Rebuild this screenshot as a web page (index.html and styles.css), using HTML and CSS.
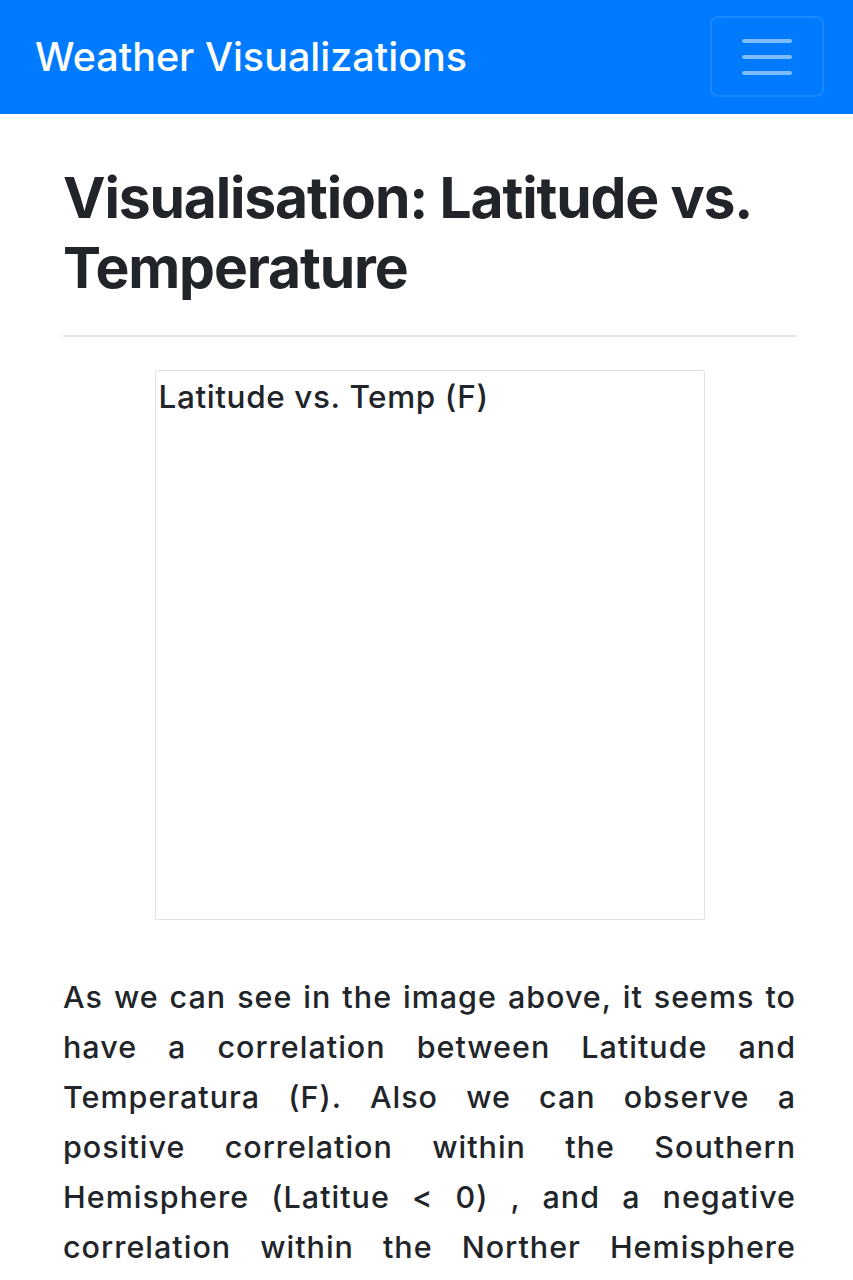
FILE: index.html
```html
<!DOCTYPE html>
<html lang="en">
<head>
<meta charset="utf-8">
<title>Weather Visualizations</title>
<link rel="stylesheet" href="styles.css">
</head>
<body>
<nav class="navbar">
  <a class="brand" href="#">Weather Visualizations</a>
  <button class="toggler" aria-label="Toggle navigation">
    <span class="bar"></span>
    <span class="bar"></span>
    <span class="bar"></span>
  </button>
</nav>
<main class="container">
  <h1 class="title">Visualisation: Latitude vs. Temperature</h1>
  <hr class="rule">
  <div class="figure">
    <div class="broken-img">Latitude vs. Temp (F)</div>
  </div>
  <p class="desc">As we can see in the image above, it seems to have a correlation between Latitude and Temperatura (F). Also we can observe a positive correlation within the Southern Hemisphere (Latitue &lt; 0) , and a negative correlation within the Norther Hemisphere (Latitude &gt; 0).</p>
</main>
</body>
</html>
```
FILE: styles.css
```css
html, body {
  margin: 0;
  padding: 0;
  background: #ffffff;
}
body {
  font-family: Inter, "Noto Sans", "Liberation Sans", sans-serif;
  color: #212529;
}
.navbar {
  height: 114px;
  background: #007bff;
  display: flex;
  align-items: center;
  justify-content: space-between;
  padding: 0 29px 0 35px;
  box-sizing: border-box;
}
.brand {
  color: #ffffff;
  text-decoration: none;
  font-size: 39.5px;
  font-weight: 500;
  letter-spacing: 0;
}
.toggler {
  width: 114px;
  height: 81px;
  margin-top: -1px;
  background: transparent;
  border: 2px solid rgba(255, 255, 255, 0.1);
  border-radius: 8px;
  display: flex;
  flex-direction: column;
  align-items: center;
  justify-content: center;
  gap: 12px;
  padding: 0;
}
.bar {
  display: block;
  width: 50px;
  height: 4px;
  border-radius: 2px;
  background: rgba(255, 255, 255, 0.5);
}
.container {
  padding: 0 57px 0 63px;
}
.title {
  margin: 49px 0 0;
  font-size: 57px;
  line-height: 70px;
  font-weight: 700;
  letter-spacing: -1.15px;
  color: #212529;
}
.rule {
  margin: 32px 0 0;
  border: 0;
  border-top: 2px solid rgba(0, 0, 0, 0.1);
}
.figure {
  display: flex;
  justify-content: center;
  margin-top: 33px;
}
.broken-img {
  width: 550px;
  height: 550px;
  box-sizing: border-box;
  border: 1px solid #e2e2e2;
  border-radius: 2px;
  padding: 5px 3px;
  font-size: 31.5px;
  line-height: 42px;
  font-weight: 500;
  letter-spacing: 0.6px;
  color: #212529;
}
.desc {
  margin: 52px 0 0;
  font-size: 30.5px;
  line-height: 50px;
  font-weight: 500;
  letter-spacing: 1px;
  word-spacing: -1px;
  text-align: justify;
  color: #212529;
}
```
